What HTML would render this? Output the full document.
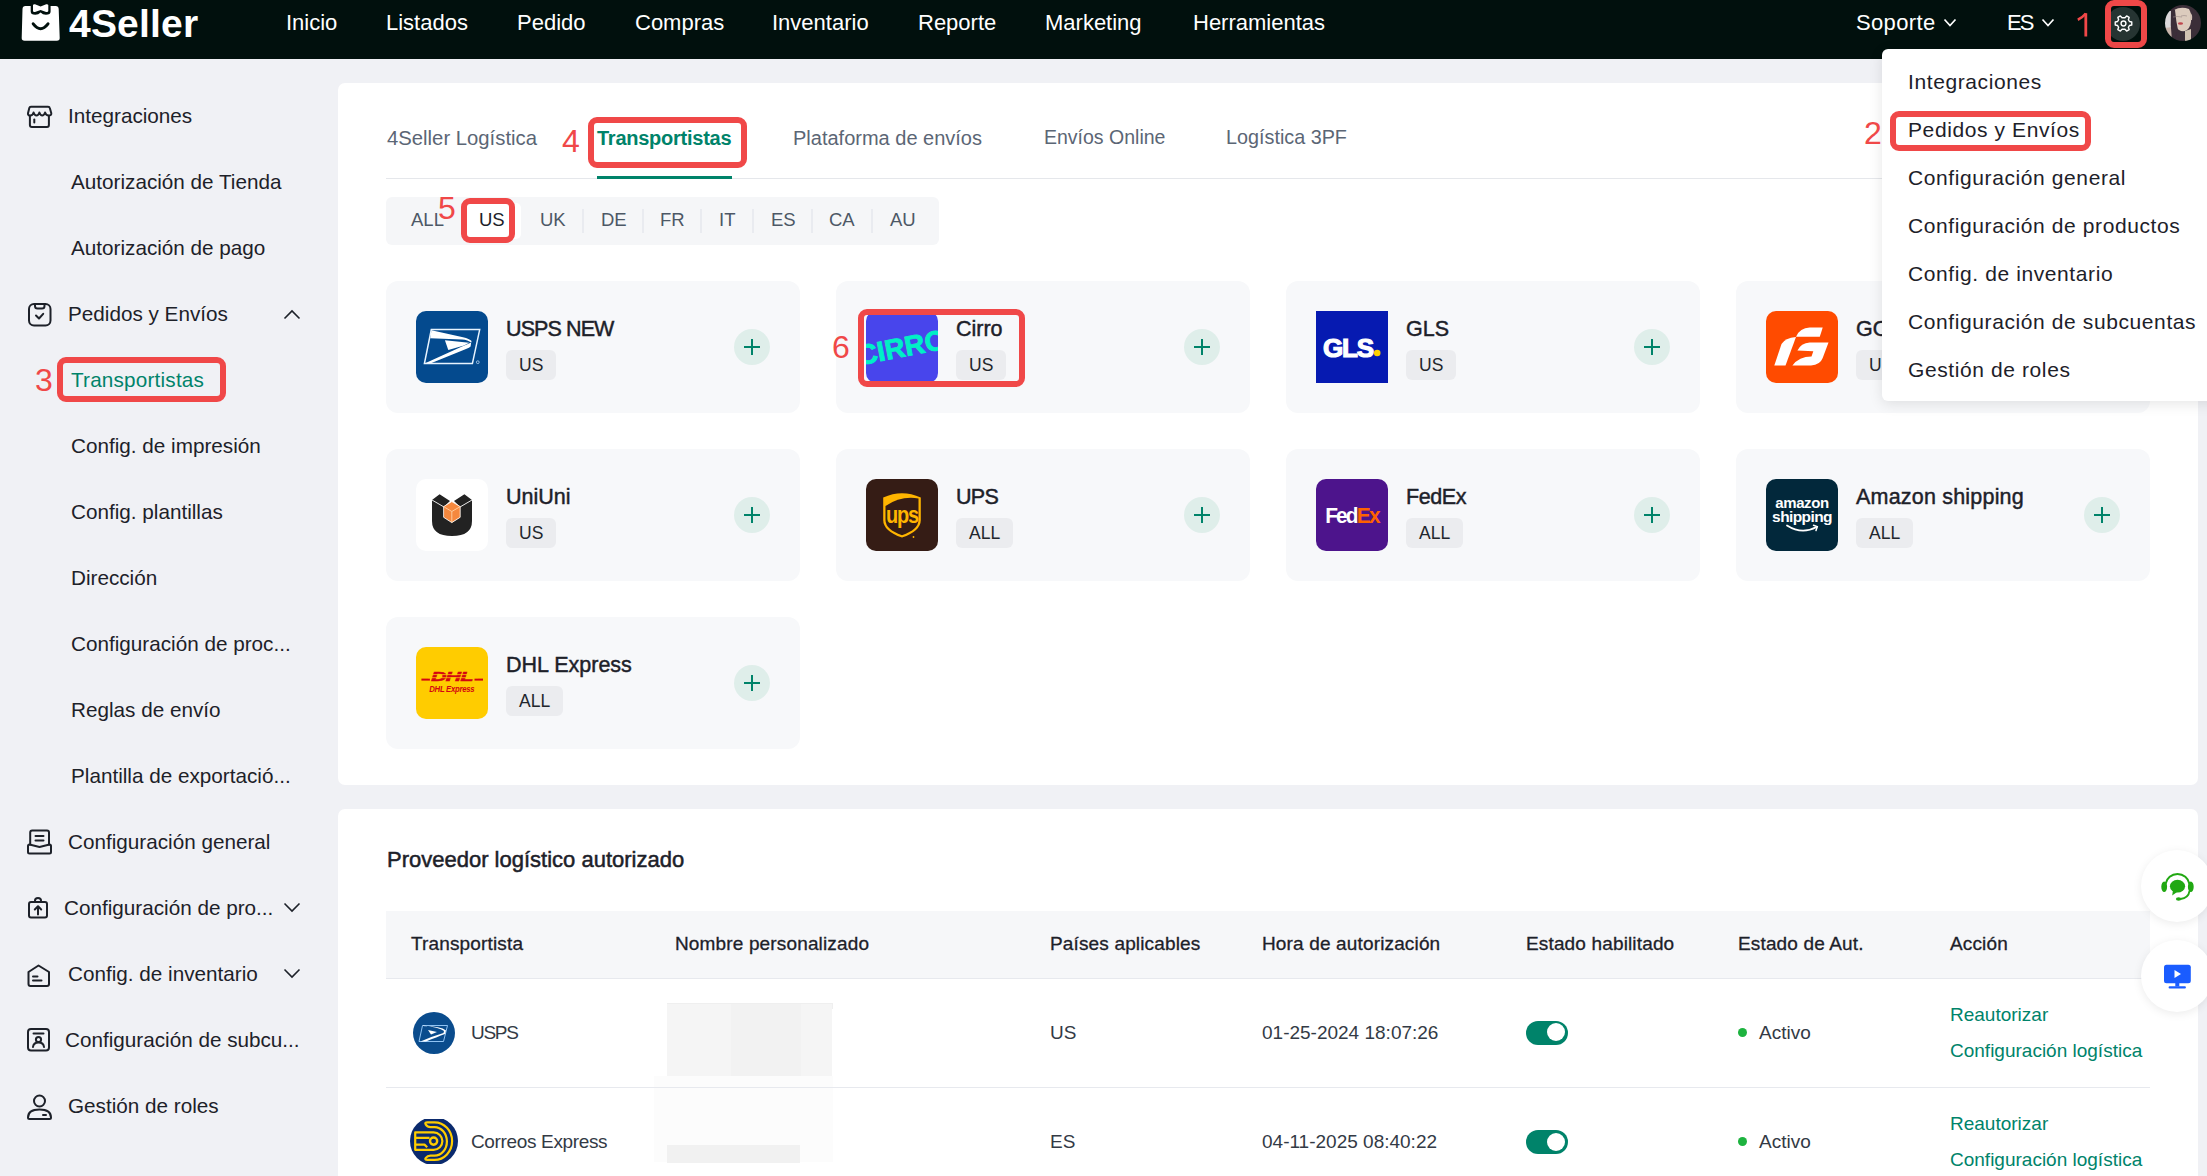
<!DOCTYPE html>
<html><head><meta charset="utf-8">
<style>
*{box-sizing:border-box;margin:0;padding:0}
html,body{width:2207px;height:1176px;overflow:hidden}
body{background:#f0f1f5;font-family:"Liberation Sans",sans-serif;color:#1f2329;position:relative}
div,span,svg{position:absolute}
.t{white-space:nowrap;line-height:1}
.hdr{left:0;top:0;width:2207px;height:59px;background:#01100d}
.nav{top:12px;color:#fff;font-size:22px}
.side{font-size:20.7px;color:#1d2129}
.red{color:#f04848;font-size:32px}
.rbox{border:6px solid #f04848;border-radius:9px}
.card{background:#fff;border-radius:7px}
.tab{top:128px;font-size:20.3px;color:#5b6675}
.cty{top:210.5px;font-size:18.5px;color:#4d5866}
.sep{top:209px;width:1.5px;height:24px;background:#e9ebf0}
.cc{width:414px;height:132px;background:#f7f8fa;border-radius:12px}
.logo{left:30px;top:30px;width:72px;height:72px;border-radius:10px;overflow:hidden}
.ct{left:120px;top:38px;font-size:21.5px;color:#1d2129;-webkit-text-stroke:0.45px #1d2129}
.tag{left:120px;top:69px;height:30px;padding:0 13px;background:#ebecef;border-radius:6px;font-size:17.5px;line-height:30px;color:#22262c;white-space:nowrap}
.plus{left:348px;top:48px;width:36px;height:36px;border-radius:50%;background:#dfeeea}
.plus:before{content:"";position:absolute;left:10px;top:17px;width:16px;height:2px;background:#00836a}
.plus:after{content:"";position:absolute;left:17px;top:10px;width:2px;height:16px;background:#00836a}
.dd{font-size:21px;color:#1d2129;left:1908px;letter-spacing:0.6px}
.th{top:934px;font-size:19px;color:#1d2129;-webkit-text-stroke:0.3px #1d2129;letter-spacing:0.15px}
.td{font-size:19px;color:#333a45}
.lnk{font-size:19px;color:#00836a}
</style></head><body>

<!-- HEADER -->
<div class="hdr"></div>
<svg style="left:20px;top:3px" width="42" height="40" viewBox="0 0 42 40"><path d="M5.5 3 L35.6 3 Q38.6 3 38.7 6 L39.7 35 Q39.8 37.8 36.8 37.8 L4.6 37.8 Q1.6 37.8 1.7 35 L2.5 6 Q2.6 3 5.5 3 Z" fill="#fff"/>
<path d="M10.7 -3 L10.7 8.5 Q10.7 11.8 15.3 11.8 Q18.5 11.8 20.6 9.6 Q22.7 11.8 25.9 11.8 Q30.6 11.8 30.6 8.5 L30.6 -3 Z" fill="#01100d"/>
<path d="M13 2 Q13.2 1 15 1.2 L20.6 3.6 L26.2 1.2 Q28.1 1 28.3 2 L28.3 8 Q28.3 9.3 26.2 9 L20.6 7.1 L15 9 Q13 9.3 13 8 Z" fill="#fff"/>
<path d="M13.2 20.8 Q20.6 30.5 28 20.8" fill="none" stroke="#01100d" stroke-width="3" stroke-linecap="round"/></svg>
<div class="t" style="left:69px;top:4px;font-size:39px;font-weight:700;color:#fff;letter-spacing:0.2px">4Seller</div>

<div class="t nav" style="left:286px">Inicio</div>
<div class="t nav" style="left:386px">Listados</div>
<div class="t nav" style="left:517px">Pedido</div>
<div class="t nav" style="left:635px">Compras</div>
<div class="t nav" style="left:772px">Inventario</div>
<div class="t nav" style="left:918px">Reporte</div>
<div class="t nav" style="left:1045px">Marketing</div>
<div class="t nav" style="left:1193px">Herramientas</div>
<div class="t nav" style="left:1856px;letter-spacing:0.35px">Soporte</div>
<svg style="left:1943px;top:18px" width="14" height="10" viewBox="0 0 14 10"><path d="M1.5 1.5 L7 7.5 L12.5 1.5" fill="none" stroke="#fff" stroke-width="1.7"/></svg>
<div class="t nav" style="left:2007px;letter-spacing:-1.8px">ES</div>
<svg style="left:2041px;top:18px" width="14" height="10" viewBox="0 0 14 10"><path d="M1.5 1.5 L7 7.5 L12.5 1.5" fill="none" stroke="#fff" stroke-width="1.7"/></svg>
<svg style="left:2076px;top:12px" width="14" height="26" viewBox="0 0 14 26"><path d="M9.8 1.2 L9.8 24.5" stroke="#f04848" stroke-width="2.8"/><path d="M9.8 1.5 Q6 6 1.8 7.8" fill="none" stroke="#f04848" stroke-width="2.6"/></svg>
<div style="left:2106px;top:6.5px;width:34px;height:34px;border-radius:50%;background:#263432"></div>
<svg style="left:2112px;top:12px" width="24" height="24" viewBox="0 0 24 24"><g transform="translate(-0.5 -0.5) rotate(90 12 12) translate(12 12) scale(0.87) translate(-12 -12)"><path d="M10.3 2.5 L13.7 2.5 L14.3 5.2 L16.4 6.4 L19 5.5 L20.7 8.4 L18.6 10.3 L18.6 13.7 L20.7 15.6 L19 18.5 L16.4 17.6 L14.3 18.8 L13.7 21.5 L10.3 21.5 L9.7 18.8 L7.6 17.6 L5 18.5 L3.3 15.6 L5.4 13.7 L5.4 10.3 L3.3 8.4 L5 5.5 L7.6 6.4 L9.7 5.2 Z" fill="none" stroke="#fff" stroke-width="1.6" stroke-linejoin="round"/><circle cx="12" cy="12" r="2.8" fill="none" stroke="#fff" stroke-width="1.6"/></g></svg>

<div class="rbox" style="left:2104.5px;top:0px;width:42px;height:48px;border-width:6px"></div>
<svg style="left:2165px;top:5px" width="36" height="36" viewBox="0 0 36 36"><defs><clipPath id="av"><circle cx="18" cy="18" r="18"/></clipPath><filter id="bl" x="-10%" y="-10%" width="120%" height="120%"><feGaussianBlur stdDeviation="0.7"/></filter></defs>
<g clip-path="url(#av)"><g filter="url(#bl)"><rect width="36" height="36" fill="#3b2d39"/>
<rect x="-1" y="6" width="9" height="19" fill="#dcdadb"/>
<path d="M-1 23 L8 22 L8 36 L-1 36 Z" fill="#c9b5ab"/>
<path d="M9 5 Q16 1 24 4 Q27 9 26 17 Q25 24 20 26 Q14 27 11 22 Q8 16 9 5 Z" fill="#dccbbd"/>
<path d="M20 26 L26 24 L26 36 L20 36 Z" fill="#d2c2b2"/>
<path d="M25 8 Q28 9 27 15 L25 15 Z" fill="#d3c1b4"/>
<ellipse cx="15.5" cy="18.5" rx="2.6" ry="1.2" fill="#c0454d"/>
<path d="M6 4 Q8 3 10 5 Q11 16 13 25 Q10 30 11 36 L7 36 Q5 20 6 4 Z" fill="#3b2d39"/>
<path d="M8 12 Q12 11 17 12 M16 11 Q19 10 22 11" stroke="#9a8a86" stroke-width="0.6" fill="none"/>
</g></g></svg>


<!-- SIDEBAR -->
<svg style="left:20px;top:95px" width="40" height="40" viewBox="0 0 40 40" fill="none" stroke="#1d2129" stroke-width="2" stroke-linejoin="round" stroke-linecap="round"><path d="M10.9 11.7 L28.1 11.7 Q29.5 11.7 29.8 13 L31.3 18.2 Q31.6 20.5 28.6 20.5 Q26 20.5 25.1 17.5 Q24 20.6 22.2 20.6 Q20.4 20.6 19.4 17.5 Q18.4 20.6 16.5 20.6 Q14.6 20.6 13.6 17.5 Q12.7 20.5 10.4 20.5 Q7.6 20.5 8 18.2 L9.3 13 Q9.6 11.7 10.9 11.7 Z"/><path d="M9.9 20.8 L9.9 30 Q9.9 31.9 11.9 31.9 L27 31.9 Q28.9 31.9 28.9 30 L28.9 20.8"/><path d="M14.3 24.4 L14.3 27.5"/></svg>
<div class="t side" style="left:68px;top:106px">Integraciones</div>
<div class="t side" style="left:71px;top:172px">Autorización de Tienda</div>
<div class="t side" style="left:71px;top:238px">Autorización de pago</div>
<svg style="left:20px;top:295px" width="40" height="40" viewBox="0 0 40 40" fill="none" stroke="#1d2129" stroke-width="2" stroke-linejoin="round" stroke-linecap="round"><rect x="9" y="9" width="21.5" height="21.5" rx="5"/><path d="M15 9 L15 11 Q15 13.5 17.5 13.5 L22 13.5 Q24.5 13.5 24.5 11 L24.5 9"/><path d="M16 20.5 L19 23.5 L23.2 18.8"/></svg>
<div class="t side" style="left:68px;top:304px">Pedidos y Envíos</div>
<svg style="left:282px;top:308px" width="20" height="14" viewBox="0 0 20 14"><path d="M2.5 10.5 L10 3 L17.5 10.5" fill="none" stroke="#1d2129" stroke-width="1.6"/></svg>
<div class="t side" style="left:71px;top:370px;color:#00836a;letter-spacing:0.2px">Transportistas</div>
<div class="rbox" style="left:57px;top:357px;width:169px;height:45px"></div>
<div class="t red" style="left:35px;top:364px">3</div>
<div class="t side" style="left:71px;top:436px">Config. de impresión</div>
<div class="t side" style="left:71px;top:502px">Config. plantillas</div>
<div class="t side" style="left:71px;top:568px">Dirección</div>
<div class="t side" style="left:71px;top:634px">Configuración de proc...</div>
<div class="t side" style="left:71px;top:700px">Reglas de envío</div>
<div class="t side" style="left:71px;top:766px">Plantilla de exportació...</div>
<svg style="left:20px;top:820px" width="40" height="40" viewBox="0 0 40 40" fill="none" stroke="#1d2129" stroke-width="2" stroke-linejoin="round" stroke-linecap="round"><path d="M10.2 24.5 L10.2 12.5 Q10.2 10.5 12.2 10.5 L27 10.5 Q29 10.5 29 12.5 L29 24.5"/><path d="M15.5 16 L23.5 16 M15.5 20.5 L23.5 20.5"/><path d="M8 26 Q8 24.5 9.5 24.5 L19.5 27 L29.5 24.5 Q31 24.5 31 26 L31 32 Q31 33.5 29.5 33.5 L9.5 33.5 Q8 33.5 8 32 Z"/></svg>
<div class="t side" style="left:68px;top:832px">Configuración general</div>
<svg style="left:20px;top:891px" width="40" height="40" viewBox="0 0 40 40" fill="none" stroke="#1d2129" stroke-width="2" stroke-linejoin="round" stroke-linecap="round"><rect x="9" y="11" width="18" height="15.5" rx="2"/><path d="M15 11 L15 9.5 Q15 7 18 7 Q21 7 21 9.5 L21 11"/><path d="M18 23.5 L18 15.5 M14.8 18.5 L18 15.3 L21.2 18.5"/></svg>
<div class="t side" style="left:64px;top:898px">Configuración de pro...</div>
<svg style="left:282px;top:900px" width="20" height="14" viewBox="0 0 20 14"><path d="M2.5 3.5 L10 11 L17.5 3.5" fill="none" stroke="#1d2129" stroke-width="1.6"/></svg>
<svg style="left:20px;top:955px" width="40" height="40" viewBox="0 0 40 40" fill="none" stroke="#1d2129" stroke-width="2" stroke-linejoin="round" stroke-linecap="round"><path d="M8.5 17 L18.5 10.5 L29 17 L29 29 Q29 31 27 31 L10.5 31 Q8.5 31 8.5 29 Z"/><path d="M13 21.5 L17.5 21.5 M13 25.5 L21.5 25.5"/></svg>
<div class="t side" style="left:68px;top:964px">Config. de inventario</div>
<svg style="left:282px;top:966px" width="20" height="14" viewBox="0 0 20 14"><path d="M2.5 3.5 L10 11 L17.5 3.5" fill="none" stroke="#1d2129" stroke-width="1.6"/></svg>
<svg style="left:20px;top:1020px" width="40" height="40" viewBox="0 0 40 40" fill="none" stroke="#1d2129" stroke-width="2" stroke-linejoin="round" stroke-linecap="round"><rect x="8" y="9" width="21" height="21.5" rx="3"/><path d="M13.5 13.5 L23.5 13.5"/><circle cx="18.5" cy="19.5" r="2.6"/><path d="M13 27 Q13.5 22.5 18.5 22.5 Q23.5 22.5 24 27"/></svg>
<div class="t side" style="left:65px;top:1030px">Configuración de subcu...</div>
<svg style="left:20px;top:1087px" width="40" height="40" viewBox="0 0 40 40" fill="none" stroke="#1d2129" stroke-width="2" stroke-linejoin="round" stroke-linecap="round"><circle cx="19.5" cy="14" r="5.5"/><path d="M8 30.5 Q8 22.5 19.5 22.5 Q31 22.5 31 30.5 Q31 32 29.5 32 L9.5 32 Q8 32 8 30.5 Z"/><path d="M23 28 L26 28"/></svg>
<div class="t side" style="left:68px;top:1096px">Gestión de roles</div>


<!-- CARD 1 -->
<div class="card" style="left:338px;top:83px;width:1860px;height:702px"></div>
<div class="t tab" style="left:387px">4Seller Logística</div>
<div class="t red" style="left:562px;top:125px">4</div>
<div class="t tab" style="left:597px;color:#00836a;font-weight:700;font-size:20px;letter-spacing:-0.25px">Transportistas</div>
<div class="rbox" style="left:588px;top:117px;width:159px;height:51px"></div>
<div class="t tab" style="left:793px;font-size:20px">Plataforma de envíos</div>
<div class="t tab" style="left:1044px;font-size:19.5px">Envíos Online</div>
<div class="t tab" style="left:1226px;font-size:19.8px">Logística 3PF</div>
<div style="left:386px;top:178px;width:1764px;height:1px;background:#e5e7eb"></div>
<div style="left:597px;top:176px;width:135px;height:3px;background:#00836a"></div>

<div style="left:386px;top:197px;width:553px;height:48px;background:#f5f6f8;border-radius:6px"></div>
<div style="left:466px;top:203px;width:55px;height:36px;background:#fff;border-radius:5px"></div>
<div class="t cty" style="left:411px">ALL</div>
<div class="t red" style="left:438px;top:192px">5</div>
<div class="t cty" style="left:479px;color:#1d2129">US</div>
<div class="rbox" style="left:461px;top:198px;width:54px;height:45px"></div>
<div class="t cty" style="left:540px">UK</div>
<div class="sep" style="left:582px"></div>
<div class="t cty" style="left:601px">DE</div>
<div class="sep" style="left:642px"></div>
<div class="t cty" style="left:660px">FR</div>
<div class="sep" style="left:700px"></div>
<div class="t cty" style="left:719px">IT</div>
<div class="sep" style="left:752px"></div>
<div class="t cty" style="left:771px">ES</div>
<div class="sep" style="left:811px"></div>
<div class="t cty" style="left:829px">CA</div>
<div class="sep" style="left:871px"></div>
<div class="t cty" style="left:890px">AU</div>

<!-- row 1 -->
<div class="cc" style="left:386px;top:281px">
  <svg class="logo" viewBox="0 0 72 72"><rect width="72" height="72" fill="#044a8e"/>
  <path d="M15.3 18.6 L63.7 18.6 L56.4 52.6 L8.4 52.6 Z" stroke="#e8f4ff" stroke-width="1.5" fill="none"/>
  <g fill="#fff"><path d="M15.5 19.2 L47 26.3 Q53.5 27.8 55.6 30 L55.2 31.5 Q52 28.8 46 28.4 L14.3 27.2 Z"/>
  <path d="M28.9 29.3 L53.2 31.8 L48 34.5 L32.3 38.9 Z"/>
  <path d="M8.6 52.4 L46 35.4 Q52 33.2 55.2 31.5 L54.6 35.6 Q53.5 37 50 38 L15.5 52 Z"/></g>
  <circle cx="61.8" cy="51.2" r="1.4" fill="none" stroke="#cfe6ff" stroke-width="0.7"/></svg>
  <div class="t ct" style="letter-spacing:-0.9px">USPS NEW</div>
  <div class="tag" style="top:69px">US</div>
  <div class="plus"></div>
</div>
<div class="cc" style="left:836px;top:281px">
  <svg class="logo" viewBox="0 0 72 72"><rect width="72" height="72" fill="#4845ec"/>
  <text x="36" y="46" font-family="Liberation Sans" font-weight="700" font-size="28" fill="#00f0c6" stroke="#00f0c6" stroke-width="0.8" text-anchor="middle" transform="rotate(-11 36 38)" letter-spacing="0">CIRRO</text></svg>
  <div class="t ct">Cirro</div>
  <div class="tag">US</div>
  <div class="plus"></div>
</div>
<div class="rbox" style="left:858px;top:309px;width:167px;height:78px"></div>
<div class="t red" style="left:832px;top:331px">6</div>
<div class="cc" style="left:1286px;top:281px">
  <svg class="logo" style="border-radius:0" viewBox="0 0 72 72"><rect width="72" height="72" fill="#061ab1"/>
  <text x="32" y="45.5" font-family="Liberation Sans" font-weight="700" font-size="26" fill="#fff" text-anchor="middle" letter-spacing="-1.2" stroke="#fff" stroke-width="1.2">GLS</text>
  <circle cx="61.2" cy="42" r="3.3" fill="#ffd100"/></svg>
  <div class="t ct">GLS</div>
  <div class="tag">US</div>
  <div class="plus"></div>
</div>
<div class="cc" style="left:1736px;top:281px">
  <svg class="logo" viewBox="0 0 72 72"><rect width="72" height="72" fill="#ff4b00"/>
  <path d="M8.3 54.5 L19.5 54.5 L30 26 Q19 27 15.5 33 Z" fill="#fff"/>
  <path d="M30 25.7 L53.8 25.7 L56.7 16.6 L43.7 16.6 Q34 17 30 25.7 Z" fill="#fff"/>
  <path d="M31.4 39.4 L47.3 40.2 L45.5 45.5 Q33 45.5 26.4 54.5 L45 54.5 Q54 54 56.7 47 L62.5 31.4 L43.7 31.4 Q35 32 31.4 39.4 Z" fill="#fff"/></svg>
  <div class="t ct">GO</div>
  <div class="tag">US</div>
  <div class="plus"></div>
</div>

<!-- row 2 -->
<div class="cc" style="left:386px;top:449px">
  <svg class="logo" viewBox="0 0 72 72"><rect width="72" height="72" fill="#fff"/>
  <path d="M16 21 L23.6 15.2 L34 22 L28 27.8 L28 38.3 L36 43.6 L44 38.3 L44 27.8 L38 22 L48.4 15.2 L56 21 L56 42 Q56 57 36 57 Q16 57 16 42 Z" fill="#222"/>
  <path d="M16 21 L28 28 M56 21 L44 28" stroke="#fff" stroke-width="0.9"/>
  <path d="M27.6 27.6 L35.8 22.6 L44.2 27.6 L44.2 38.3 L35.8 43.6 L27.6 38.3 Z" fill="#f5883e" stroke="#fff" stroke-width="0.8"/>
  <path d="M27.6 27.6 L35.8 32.5 L44.2 27.6 M35.8 32.5 L35.8 43.6" fill="none" stroke="#ffd9b0" stroke-width="0.8"/></svg>
  <div class="t ct">UniUni</div>
  <div class="tag">US</div>
  <div class="plus"></div>
</div>
<div class="cc" style="left:836px;top:449px">
  <svg class="logo" viewBox="0 0 72 72"><rect width="72" height="72" fill="#351c15"/>
  <path d="M17.2 18.5 Q36 10 54.8 18.5 L54.8 41 Q54.8 52 36 58.6 Q17.2 52 17.2 41 Z" fill="#ffb500"/>
  <path d="M19.5 27 Q35 16.5 52.5 19.5 L52.5 41 Q52.5 50.5 36 56.2 Q19.5 50.5 19.5 41 Z" fill="#351c15"/>
  <text x="36" y="44" font-family="Liberation Sans" font-weight="700" font-size="20" fill="#ffb500" text-anchor="middle" letter-spacing="-1.2" transform="translate(0 44) scale(1 1.2) translate(0 -44)">ups</text>
  <circle cx="47.5" cy="58" r="0.9" fill="#ffb500"/></svg>
  <div class="t ct" style="letter-spacing:-0.7px">UPS</div>
  <div class="tag">ALL</div>
  <div class="plus"></div>
</div>
<div class="cc" style="left:1286px;top:449px">
  <svg class="logo" viewBox="0 0 72 72"><rect width="72" height="72" fill="#4d148c"/>
  <text x="9.2" y="44" font-family="Liberation Sans" font-weight="700" font-size="22.5" fill="#fff" letter-spacing="-2" transform="translate(9 0) scale(0.93 1) translate(-9 0)">Fed<tspan fill="#ff6200">Ex</tspan></text></svg>
  <div class="t ct" style="letter-spacing:-0.4px">FedEx</div>
  <div class="tag">ALL</div>
  <div class="plus"></div>
</div>
<div class="cc" style="left:1736px;top:449px">
  <svg class="logo" viewBox="0 0 72 72"><rect width="72" height="72" fill="#02283b"/>
  <text x="36" y="29" font-family="Liberation Sans" font-weight="700" font-size="15" fill="#fff" text-anchor="middle" letter-spacing="-0.4">amazon</text>
  <text x="36" y="42.5" font-family="Liberation Sans" font-weight="700" font-size="15.5" fill="#fff" text-anchor="middle" letter-spacing="-0.6">shipping</text>
  <path d="M21 46.5 Q36 56 50.5 48" fill="none" stroke="#fff" stroke-width="1.8" stroke-linecap="round"/>
  <path d="M47.5 46.2 L51.3 47.6 L50 51.5" fill="none" stroke="#fff" stroke-width="1.5" stroke-linecap="round"/></svg>
  <div class="t ct" style="letter-spacing:0.2px">Amazon shipping</div>
  <div class="tag">ALL</div>
  <div class="plus"></div>
</div>

<!-- row 3 -->
<div class="cc" style="left:386px;top:617px">
  <svg class="logo" viewBox="0 0 72 72"><rect width="72" height="72" fill="#ffcc00"/>
  <g fill="#d40511">
  <rect x="5.4" y="31.6" width="8.5" height="2"/><rect x="58.5" y="31.6" width="8.5" height="2"/>
  <text x="36" y="34" font-family="Liberation Sans" font-weight="700" font-style="italic" font-size="12" text-anchor="middle" transform="translate(36 0) scale(1.75 1) translate(-36 0)" letter-spacing="-0.3" stroke="#d40511" stroke-width="0.6">DHL</text>
  <text x="35.8" y="44.7" font-family="Liberation Sans" font-weight="700" font-style="italic" font-size="8.6" text-anchor="middle" letter-spacing="-0.3" transform="translate(36 0) scale(0.9 1) translate(-36 0)">DHL Express</text>
  </g>
  <g stroke="#ffcc00" stroke-width="0.8"><path d="M12 27.6 L62 27.6 M12 30.7 L62 30.7"/></g></svg>
  <div class="t ct">DHL Express</div>
  <div class="tag">ALL</div>
  <div class="plus"></div>
</div>


<!-- CARD 2 -->
<div class="card" style="left:338px;top:809px;width:1860px;height:400px"></div>
<div class="t" style="left:387px;top:849px;font-size:22px;color:#1d2129;-webkit-text-stroke:0.5px #1d2129">Proveedor logístico autorizado</div>
<div style="left:386px;top:911px;width:1764px;height:67px;background:#f6f7f9"></div>
<div style="left:386px;top:978px;width:1764px;height:1px;background:#e7e9ee"></div>
<div class="t th" style="left:411px">Transportista</div>
<div class="t th" style="left:675px">Nombre personalizado</div>
<div class="t th" style="left:1050px">Países aplicables</div>
<div class="t th" style="left:1262px">Hora de autorización</div>
<div class="t th" style="left:1526px">Estado habilitado</div>
<div class="t th" style="left:1738px">Estado de Aut.</div>
<div class="t th" style="left:1950px">Acción</div>

<svg style="left:413px;top:1012px" width="42" height="42" viewBox="0 0 42 42"><circle cx="21" cy="21" r="21" fill="#0a4c8d"/>
<path d="M9.5 13.5 L34.5 13.5 L30.5 29.5 L6 29.5 Z" fill="none" stroke="#9fd0ff" stroke-width="0.9"/>
<path d="M10 13.5 Q26 15 31 19 L30.5 21 Q20 24 7.5 29.5 L13 29.5 Q24 25 32 22 L33 18.5 Q28 14 10 14 Z" fill="#fff"/>
<path d="M15 18 L24 20 L18 22.5 Z" fill="#fff"/></svg>
<div class="t td" style="left:471px;top:1023px;letter-spacing:-1.3px">USPS</div>
<div style="left:667px;top:1003px;width:166px;height:6px;background:#efefef"></div>
<div style="left:667px;top:1004px;width:165px;height:72px;background:#f5f5f5"></div>
<div style="left:731px;top:1004px;width:70px;height:72px;background:#f2f2f2"></div>
<div style="left:654px;top:1076px;width:179px;height:86px;background:#fcfcfc"></div>
<div style="left:667px;top:1145px;width:133px;height:18px;background:#f1f1f1"></div>
<div class="t td" style="left:1050px;top:1023px">US</div>
<div class="t td" style="left:1262px;top:1023px">01-25-2024 18:07:26</div>
<div style="left:1526px;top:1021px;width:42px;height:24px;border-radius:12px;background:#00836a"></div>
<div style="left:1547px;top:1023px;width:18px;height:18px;border-radius:50%;background:#fff"></div>
<div style="left:1738px;top:1028px;width:9px;height:9px;border-radius:50%;background:#1db33f"></div>
<div class="t td" style="left:1759px;top:1023px">Activo</div>
<div class="t lnk" style="left:1950px;top:1005px">Reautorizar</div>
<div class="t lnk" style="left:1950px;top:1041px">Configuración logística</div>
<div style="left:386px;top:1087px;width:1764px;height:1px;background:#e7e9ee"></div>

<svg style="left:410px;top:1117px" width="48" height="48" viewBox="0 0 48 48"><defs><clipPath id="cx"><rect x="0" y="2" width="48" height="45"/></clipPath></defs><g clip-path="url(#cx)"><circle cx="24" cy="24" r="24" fill="#0b2a6d"/>
<g fill="none" stroke="#ffcd00" stroke-width="2.2" stroke-linejoin="round">
<path d="M17.5 5.3 L24.5 5.3 A 17.6 18.8 0 0 1 24.5 42.9 L17.5 42.9 Q14.2 42.9 15.8 40.8 Q17.4 38.7 20.5 38.7 L24.5 38.7 A 12.4 14.3 0 0 0 24.5 10.1 L20.5 10.1 Q17.4 10.1 15.8 7.6 Q14.2 5.3 17.5 5.3 Z"/>
<path d="M5.2 15.4 L23.6 15.4 A 8.8 8.7 0 0 1 23.6 32.8 L5.2 32.8 Z"/>
<path d="M6 20.8 L19.5 20.8 M6 27.6 L14.5 27.6 L17.2 30.2"/>
<circle cx="23.6" cy="24.1" r="3.6" stroke-width="2.4"/>
</g></g></svg>
<div class="t td" style="left:471px;top:1132px;letter-spacing:-0.35px">Correos Express</div>
<div class="t td" style="left:1050px;top:1132px">ES</div>
<div class="t td" style="left:1262px;top:1132px">04-11-2025 08:40:22</div>
<div style="left:1526px;top:1130px;width:42px;height:24px;border-radius:12px;background:#00836a"></div>
<div style="left:1547px;top:1133px;width:18px;height:18px;border-radius:50%;background:#fff"></div>
<div style="left:1738px;top:1137px;width:9px;height:9px;border-radius:50%;background:#1db33f"></div>
<div class="t td" style="left:1759px;top:1132px">Activo</div>
<div class="t lnk" style="left:1950px;top:1114px">Reautorizar</div>
<div class="t lnk" style="left:1950px;top:1150px">Configuración logística</div>


<div style="left:1882px;top:49px;width:340px;height:352px;background:#fff;border-radius:6px;box-shadow:0 3px 14px rgba(0,0,0,0.10)"></div>
<div class="t dd" style="top:71px">Integraciones</div>
<div class="t dd" style="top:119px">Pedidos y Envíos</div>
<div class="rbox" style="left:1890px;top:111px;width:201px;height:40px"></div>
<div class="t red" style="left:1864px;top:117px">2</div>
<div class="t dd" style="top:167px">Configuración general</div>
<div class="t dd" style="top:215px">Configuración de productos</div>
<div class="t dd" style="top:263px">Config. de inventario</div>
<div class="t dd" style="top:311px">Configuración de subcuentas</div>
<div class="t dd" style="top:359px">Gestión de roles</div>


<div style="left:2141px;top:850px;width:72px;height:72px;border-radius:50%;background:#fff;box-shadow:0 2px 10px rgba(0,0,0,0.08)"></div>
<svg style="left:2159px;top:870px" width="36" height="34" viewBox="0 0 36 34"><g fill="#21a812"><ellipse cx="5.2" cy="16.7" rx="2.9" ry="5.3"/><ellipse cx="31.8" cy="16.7" rx="2.9" ry="5.3"/>
<ellipse cx="18.5" cy="16.2" rx="7.6" ry="6.4"/><path d="M14 20 L13.2 25.5 L19.5 21 Z"/><ellipse cx="19.6" cy="29" rx="2.7" ry="1.8"/></g>
<path d="M6.5 14 A 12.2 12.2 0 0 1 30.5 14" fill="none" stroke="#21a812" stroke-width="2"/><path d="M30.5 21 Q29.5 28 21.5 29" fill="none" stroke="#21a812" stroke-width="1.8"/></svg>
<div style="left:2141px;top:940px;width:72px;height:72px;border-radius:50%;background:#fff;box-shadow:0 2px 10px rgba(0,0,0,0.08)"></div>
<svg style="left:2162px;top:962px" width="30" height="28" viewBox="0 0 30 28"><rect x="2" y="2.8" width="26.8" height="18.4" rx="2.5" fill="#1a5cff"/><path d="M12.5 8 L19 12 L12.5 16 Z" fill="#fff"/><rect x="13.3" y="21" width="4" height="3.5" fill="#1a5cff"/><rect x="6.6" y="24.2" width="17.3" height="2.4" rx="1" fill="#1a5cff"/></svg>

</body></html>
